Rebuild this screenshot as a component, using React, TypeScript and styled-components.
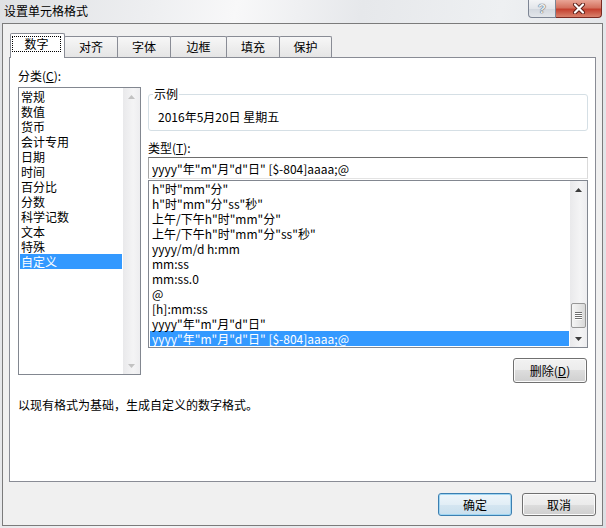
import React from "react";
import styled, { createGlobalStyle } from "styled-components";

const GlobalStyle = createGlobalStyle`
  html, body { margin: 0; padding: 0; }
  body {
    font-family: "Noto Sans CJK SC", "Noto Sans", sans-serif;
    font-size: 12px;
    color: #000;
    background: #e6e8eb;
  }
`;

const categories = [
  "常规", "数值", "货币", "会计专用", "日期", "时间",
  "百分比", "分数", "科学记数", "文本", "特殊", "自定义",
];

const formats = [
  'h"时"mm"分"',
  'h"时"mm"分"ss"秒"',
  '上午/下午h"时"mm"分"',
  '上午/下午h"时"mm"分"ss"秒"',
  "yyyy/m/d h:mm",
  "mm:ss",
  "mm:ss.0",
  "@",
  "[h]:mm:ss",
  'yyyy"年"m"月"d"日"',
  'yyyy"年"m"月"d"日" [$-804]aaaa;@',
];

const tabs = [
  { label: "数字", width: 55 },
  { label: "对齐", width: 54 },
  { label: "字体", width: 54 },
  { label: "边框", width: 57 },
  { label: "填充", width: 54 },
  { label: "保护", width: 53 },
];

const Window = styled.div`
  width: 606px;
  height: 528px;
  box-sizing: border-box;
  padding: 0 3px 2px 2px;
  display: flex;
  flex-direction: column;
  background: linear-gradient(100deg, #dfe1e4 0%, #eeeff1 22%, #f8f8f9 34%, #e6e8eb 52%, #eef0f2 72%, #dcdfe3 100%);
`;

const TitleBar = styled.div`
  height: 23px;
  display: flex;
  justify-content: space-between;
  align-items: flex-start;
`;

const Title = styled.div`
  padding: 3px 0 0 2px;
  line-height: 16px;
`;

const Caption = styled.div`
  display: flex;
  margin-right: 1px;
`;

const CaptionButton = styled.div<{ $close?: boolean }>`
  width: ${(p) => (p.$close ? 46 : 28)}px;
  height: 18px;
  box-sizing: border-box;
  display: flex;
  align-items: center;
  justify-content: center;
  border: 1px solid ${(p) => (p.$close ? "#7a2a22" : "#7d8594")};
  border-top: none;
  border-radius: ${(p) => (p.$close ? "0 0 4px 0" : "0 0 0 4px")};
  border-left: ${(p) => (p.$close ? "none" : undefined)};
  background: ${(p) =>
    p.$close
      ? "linear-gradient(#e9a596, #d4725f 45%, #c4412f 55%, #d9826c)"
      : "linear-gradient(#f3f4f6, #e2e5ea 50%, #d3d8df 55%, #e3e6ea)"};
  font-family: "Liberation Sans", sans-serif;
  font-weight: bold;
  font-size: 13px;
  color: #eef1f4;
  text-shadow: 0 0 1px #3b4656, 0 0 1px #3b4656;
`;

const Client = styled.div`
  flex: 1;
  border: 1px solid #7b7b7b;
  background: #f0f0f0;
  padding: 9px 6px 0 6px;
  display: flex;
  flex-direction: column;
`;

const TabStrip = styled.div`
  display: flex;
  align-items: flex-start;
  height: 25px;
  padding-left: 1px;
  margin-bottom: -1px;
  position: relative;
  z-index: 1;
`;

const Tab = styled.div<{ $active?: boolean; $w: number }>`
  width: ${(p) => p.$w}px;
  height: ${(p) => (p.$active ? 25 : 21)}px;
  margin-top: ${(p) => (p.$active ? 0 : 3)}px;
  margin-right: -1px;
  box-sizing: border-box;
  border: 1px solid #898c95;
  border-bottom: none;
  border-radius: 2px 2px 0 0;
  background: ${(p) => (p.$active ? "#fff" : "linear-gradient(#f7f7f7, #e5e5e5)")};
  display: flex;
  align-items: ${(p) => (p.$active ? "flex-start" : "center")};
  justify-content: center;
  line-height: 16px;
  position: relative;
  z-index: ${(p) => (p.$active ? 1 : 0)};
`;

const FocusRect = styled.span`
  flex: 1;
  margin: 2px 3px 0 1px;
  border: 1px dotted #000;
  line-height: 14px;
  text-align: center;
`;

const Panel = styled.div`
  width: 587px;
  height: 425px;
  box-sizing: border-box;
  border: 1px solid #898c95;
  background: #fff;
  padding: 10px 7px 0 8px;
  display: flex;
  flex-direction: column;
`;

const Body = styled.div`
  display: flex;
  gap: 7px;
`;

const LeftColumn = styled.div`
  width: 123px;
  display: flex;
  flex-direction: column;
`;

const RightColumn = styled.div`
  width: 440px;
  display: flex;
  flex-direction: column;
`;

const Label = styled.div<{ $gapTop?: number }>`
  line-height: 16px;
  margin-top: ${(p) => p.$gapTop ?? 0}px;
`;

const ListBox = styled.div<{ $h: number }>`
  height: ${(p) => p.$h}px;
  box-sizing: border-box;
  border: 1px solid #828790;
  background: #fff;
  display: flex;
`;

const Rows = styled.div<{ $pad: number }>`
  flex: 1;
  padding: ${(p) => p.$pad}px 1px 0 1px;
  min-width: 0;
`;

const Row = styled.div<{ $selected?: boolean; $indent: number }>`
  height: 15px;
  line-height: 15px;
  padding-left: ${(p) => p.$indent}px;
  white-space: nowrap;
  background: ${(p) => (p.$selected ? "#3399ff" : "transparent")};
  color: ${(p) => (p.$selected ? "#fff" : "#000")};
`;

const ScrollBar = styled.div`
  width: 17px;
  display: flex;
  flex-direction: column;
  background: linear-gradient(90deg, #e9e9eb, #f4f4f5 60%, #ededef);
`;

const ArrowBox = styled.div`
  height: 17px;
  display: flex;
  align-items: center;
  justify-content: center;
`;

const Track = styled.div`
  flex: 1;
  display: flex;
  flex-direction: column;
  justify-content: flex-end;
  align-items: center;
  padding-bottom: 2px;
`;

const Thumb = styled.div`
  width: 15px;
  height: 25px;
  box-sizing: border-box;
  border: 1px solid #979797;
  border-radius: 2px;
  background: linear-gradient(90deg, #f5f5f5, #e8e8e8 50%, #d9d9d9);
  display: flex;
  flex-direction: column;
  justify-content: center;
  align-items: center;
  gap: 1px;
`;

const Grip = styled.div`
  width: 7px;
  height: 1px;
  background: #6e6e6e;
  box-shadow: 0 1px 0 #fff;
`;

const GroupBox = styled.fieldset`
  margin: 19px 0 0 0;
  padding: 0 9px 6px;
  border: 1px solid #d5dfe5;
  border-radius: 3px;
  min-width: 0;
`;

const Legend = styled.legend`
  padding: 0 1px;
  margin-left: -5px;
  line-height: 14px;
`;

const Sample = styled.div`
  margin-top: 9px;
  line-height: 14px;
`;

const FormatInput = styled.input`
  display: block;
  margin: 1px 0 0 0;
  width: 440px;
  height: 22px;
  box-sizing: border-box;
  padding: 0 3px;
  border: 1px solid;
  border-color: #6d6d6d #dadada #e3e3e3 #a5a5a5;
  font: inherit;
  font-size: 12px;
  color: #000;
  outline: none;
`;

const Button = styled.div<{ $default?: boolean }>`
  width: 74px;
  height: ${(p) => (p.$default ? 23 : 25)}px;
  box-sizing: border-box;
  border: 1px solid ${(p) => (p.$default ? "#3c7fb1" : "#707070")};
  border-radius: 3px;
  background: ${(p) =>
    p.$default
      ? "linear-gradient(#eef6fb, #e2eef6 50%, #d5e6f1 50%, #c9dfee)"
      : "linear-gradient(#f2f2f2, #ebebeb 50%, #dddddd 50%, #cfcfcf)"};
  box-shadow: inset 0 0 0 1px ${(p) => (p.$default ? "#9fd5f2" : "#fbfbfb")};
  display: flex;
  align-items: center;
  justify-content: center;
  line-height: 14px;
`;

const DeleteButton = styled(Button)`
  align-self: flex-end;
  margin: 10px 1px 0 0;
`;

const Description = styled.div`
  margin-top: 15px;
  line-height: 14px;
`;

const Footer = styled.div`
  display: flex;
  justify-content: flex-end;
  gap: 10px;
  margin-top: 11px;
`;

const FooterButton = styled(Button)`
  height: 23px;
`;

const Arrow: React.FC<{ down?: boolean; color: string }> = ({ down, color }) => (
  <svg width="7" height="4" viewBox="0 0 7 4">
    <path d={down ? "M0 0h7L3.5 4z" : "M0 4h7L3.5 0z"} fill={color} />
  </svg>
);

const CloseGlyph = () => (
  <svg width="14" height="11" viewBox="0 0 14 11">
    <path d="M3 1.5l8 8M11 1.5l-8 8" stroke="#5a1d16" strokeWidth="4" strokeLinecap="round" />
    <path d="M3 1.5l8 8M11 1.5l-8 8" stroke="#fff" strokeWidth="2.2" strokeLinecap="round" />
  </svg>
);

export default function App() {
  return (
    <>
      <GlobalStyle />
      <Window>
        <TitleBar>
          <Title>设置单元格格式</Title>
          <Caption>
            <CaptionButton>?</CaptionButton>
            <CaptionButton $close>
              <CloseGlyph />
            </CaptionButton>
          </Caption>
        </TitleBar>
        <Client>
          <TabStrip>
            {tabs.map((t, i) => (
              <Tab key={t.label} $w={t.width} $active={i === 0}>
                {i === 0 ? <FocusRect>{t.label}</FocusRect> : t.label}
              </Tab>
            ))}
          </TabStrip>
          <Panel>
            <Body>
              <LeftColumn>
                <Label>
                  分类(<u>C</u>):
                </Label>
                <ListBox $h={288} style={{ marginTop: 3 }}>
                  <Rows $pad={1}>
                    {categories.map((c, i) => (
                      <Row key={c} $indent={1} $selected={i === categories.length - 1}>
                        {c}
                      </Row>
                    ))}
                  </Rows>
                  <ScrollBar>
                    <ArrowBox>
                      <Arrow color="#c2c2c2" />
                    </ArrowBox>
                    <Track />
                    <ArrowBox>
                      <Arrow down color="#c2c2c2" />
                    </ArrowBox>
                  </ScrollBar>
                </ListBox>
              </LeftColumn>
              <RightColumn>
                <GroupBox>
                  <Legend>示例</Legend>
                  <Sample>2016年5月20日 星期五</Sample>
                </GroupBox>
                <Label $gapTop={9}>
                  类型(<u>T</u>):
                </Label>
                <FormatInput readOnly value={formats[formats.length - 1]} />
                <ListBox $h={168} style={{ marginTop: 1 }}>
                  <Rows $pad={0}>
                    {formats.map((f, i) => (
                      <Row key={f} $indent={2} $selected={i === formats.length - 1}>
                        {f}
                      </Row>
                    ))}
                  </Rows>
                  <ScrollBar>
                    <ArrowBox>
                      <Arrow color="#3c3c3c" />
                    </ArrowBox>
                    <Track>
                      <Thumb>
                        <Grip />
                        <Grip />
                        <Grip />
                        <Grip />
                      </Thumb>
                    </Track>
                    <ArrowBox>
                      <Arrow down color="#3c3c3c" />
                    </ArrowBox>
                  </ScrollBar>
                </ListBox>
                <DeleteButton>
                  删除(<u>D</u>)
                </DeleteButton>
              </RightColumn>
            </Body>
            <Description>以现有格式为基础，生成自定义的数字格式。</Description>
          </Panel>
          <Footer>
            <FooterButton $default>确定</FooterButton>
            <FooterButton>取消</FooterButton>
          </Footer>
        </Client>
      </Window>
    </>
  );
}
